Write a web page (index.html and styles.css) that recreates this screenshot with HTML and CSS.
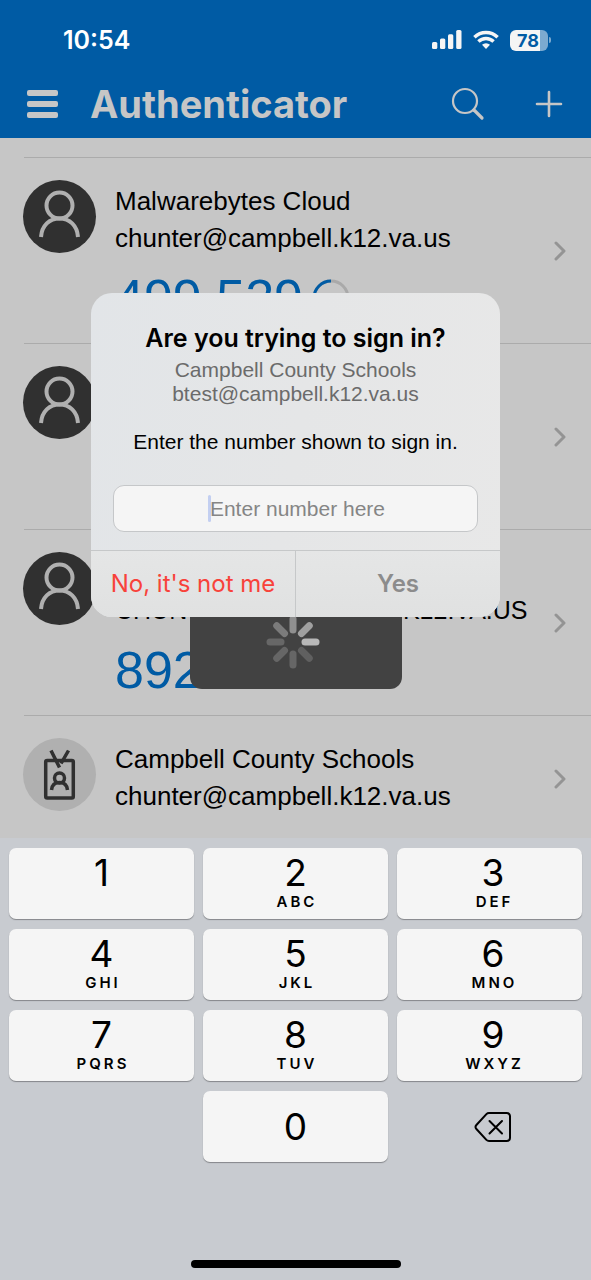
FILE: index.html
```
<!DOCTYPE html>
<html lang="en">
<head>
<meta charset="utf-8">
<meta name="viewport" content="width=device-width, initial-scale=1">
<title>Authenticator</title>
<link rel="stylesheet" href="styles.css">
</head>
<body>
<svg class="defs" width="0" height="0" aria-hidden="true">
  <symbol id="person" viewBox="0 0 73 73">
    <circle cx="36.500" cy="25.500" r="13"/>
    <path d="M18 57c.8-11.500 8.500-18.500 18.500-18.500s17.700 7 18.500 18.500"/>
  </symbol>
  <symbol id="chevron" viewBox="0 0 12 20">
    <path d="M2 2l8 8-8 8"/>
  </symbol>
</svg>
<div class="screen">
  <header class="header">
    <div class="status">
      <time class="clock">10:54</time>
      <div class="indicators">
        <svg width="30" height="20" viewBox="0 0 30 20" fill="#f5f5f5" aria-label="Signal"><rect x="0" y="12" width="5.300" height="7" rx="1.500"/><rect x="8" y="8.500" width="5.300" height="10.500" rx="1.500"/><rect x="16" y="4.300" width="5.300" height="14.700" rx="1.500"/><rect x="24.200" y="0" width="5.300" height="19" rx="1.500"/></svg>
        <svg width="26" height="20" viewBox="0 0 26 20" fill="none" stroke="#f5f5f5" stroke-width="3.400" aria-label="Wi-Fi"><path d="M1.400 7.200a16.500 16.500 0 0 1 23.200 0"/><path d="M5.400 11.600a11 11 0 0 1 15.200 0"/><path d="M13 19l-4-4.200a6 6 0 0 1 8 0z" fill="#f5f5f5" stroke="none"/></svg>
        <div class="battery"><span class="battery-body">78</span><span class="battery-tip"></span></div>
      </div>
    </div>
    <div class="toolbar">
      <button class="icon-button" aria-label="Menu"><svg width="32" height="30" viewBox="0 0 32 30" fill="#c6c6c6"><rect x="1" y="1" width="31" height="6" rx="2"/><rect x="1" y="12" width="31" height="6" rx="2"/><rect x="1" y="23" width="31" height="6" rx="2"/></svg></button>
      <h1 class="title">Authenticator</h1>
      <button class="icon-button" aria-label="Search"><svg width="34" height="34" viewBox="0 0 34 34" fill="none" stroke="#c6c6c6" stroke-linecap="round"><circle cx="14" cy="14" r="12" stroke-width="2.200"/><path d="M23 23l8 8" stroke-width="3.200"/></svg></button>
      <button class="icon-button" aria-label="Add account"><svg width="28" height="28" viewBox="0 0 28 28" fill="none" stroke="#c6c6c6" stroke-width="2.600" stroke-linecap="round"><path d="M14 2v24M2 14h24"/></svg></button>
    </div>
  </header>

  <main class="content">
    <ul class="accounts">
      <li class="account">
        <svg class="avatar"><use href="#person"/></svg>
        <div class="details">
          <p class="line">Malwarebytes Cloud</p>
          <p class="line">chunter@campbell.k12.va.us</p>
          <p class="code">499 529 <svg width="38" height="38" viewBox="0 0 38 38" fill="none" stroke-width="3"><circle cx="19" cy="19" r="17" stroke="#a9a9a9"/><path d="M19 2a17 17 0 0 0-17 17" stroke="#005ba4"/></svg></p>
        </div>
        <svg class="chevron"><use href="#chevron"/></svg>
      </li>
      <li class="account">
        <svg class="avatar"><use href="#person"/></svg>
        <div class="details"></div>
        <svg class="chevron"><use href="#chevron"/></svg>
      </li>
      <li class="account">
        <svg class="avatar"><use href="#person"/></svg>
        <div class="details">
          <p class="line"></p>
          <p class="line line-upper">CHUNTER@CAMPBELL.K12.VA.US</p>
          <p class="code">892 829</p>
        </div>
        <svg class="chevron"><use href="#chevron"/></svg>
      </li>
      <li class="account account-last">
        <svg class="avatar avatar-badge" viewBox="0 0 73 73"><rect x="22.700" y="22.500" width="27.600" height="37.500" rx="1.500"/><path d="M28 12.500l8.500 17M45.500 12.500l-7.500 13"/><circle cx="36.500" cy="40" r="5"/><path d="M28.500 52c.5-5 3.500-7.500 8-7.500s7.500 2.500 8 7.500"/></svg>
        <div class="details">
          <p class="line">Campbell County Schools</p>
          <p class="line">chunter@campbell.k12.va.us</p>
        </div>
        <svg class="chevron"><use href="#chevron"/></svg>
      </li>
    </ul>

    <div class="overlay overlay-progress">
      <div class="progress" role="status" aria-label="Loading">
        <svg width="54" height="54" viewBox="-27 -27 54 54" stroke-width="7" stroke-linecap="round"><path d="M0-12v-11" stroke="#8f8f8f"/><path d="M0-12v-11" stroke="#a0a0a0" transform="rotate(45)"/><path d="M0-12v-11" stroke="#b8b8b8" transform="rotate(90)"/><path d="M0-12v-11" stroke="#606060" transform="rotate(135)"/><path d="M0-12v-11" stroke="#666" transform="rotate(180)"/><path d="M0-12v-11" stroke="#666" transform="rotate(225)"/><path d="M0-12v-11" stroke="#676767" transform="rotate(270)"/><path d="M0-12v-11" stroke="#7b7b7b" transform="rotate(315)"/></svg>
      </div>
    </div>

    <div class="overlay overlay-dialog">
      <form class="dialog" role="dialog" aria-labelledby="dialog-title">
        <div class="dialog-body">
          <h2 class="dialog-title" id="dialog-title">Are you trying to sign in?</h2>
          <p class="dialog-account">Campbell County Schools<br>btest@campbell.k12.va.us</p>
          <label class="dialog-prompt" for="number">Enter the number shown to sign in.</label>
          <div class="field">
            <input class="number" id="number" type="text" inputmode="numeric" placeholder="Enter number here">
            <span class="caret"></span>
          </div>
        </div>
        <div class="actions">
          <button class="action action-deny" type="button">No, it's not me</button>
          <button class="action action-approve" type="button" disabled>Yes</button>
        </div>
      </form>
    </div>
  </main>

  <section class="keyboard" aria-label="Number pad">
    <div class="keys">
      <button class="key"><span class="digit">1</span><span class="letters"></span></button>
      <button class="key"><span class="digit">2</span><span class="letters">ABC</span></button>
      <button class="key"><span class="digit">3</span><span class="letters">DEF</span></button>
      <button class="key"><span class="digit">4</span><span class="letters">GHI</span></button>
      <button class="key"><span class="digit">5</span><span class="letters">JKL</span></button>
      <button class="key"><span class="digit">6</span><span class="letters">MNO</span></button>
      <button class="key"><span class="digit">7</span><span class="letters">PQRS</span></button>
      <button class="key"><span class="digit">8</span><span class="letters">TUV</span></button>
      <button class="key"><span class="digit">9</span><span class="letters">WXYZ</span></button>
      <button class="key key-zero"><span class="digit">0</span></button>
      <button class="key key-delete" aria-label="Delete"><svg width="38" height="32" viewBox="0 0 38 32" fill="none" stroke="#000" stroke-width="2" stroke-linecap="round" stroke-linejoin="round"><path d="M15 2h17.500q3.500 0 3.500 3.500v21q0 3.500-3.500 3.500h-17.500q-1.500 0-2.600-1.100l-10-10.900q-1.800-2 0-4l10-10.900q1.100-1.100 2.600-1.100z"/><path d="M15.500 10l12.500 12.500M28 10l-12.500 12.500"/></svg></button>
    </div>
    <div class="home-bar"></div>
  </section>
</div>
</body>
</html>
```
FILE: styles.css
```
* { box-sizing: border-box; }
body { margin: 0; font-family: "Liberation Sans", Arial, sans-serif; color: #000; }
button { border: 0; padding: 0; background: none; font: inherit; color: inherit; }
h1, h2, p, ul { margin: 0; padding: 0; }
.defs { display: block; }
.screen { display: flex; flex-direction: column; min-height: 100vh; background: #c6c6c6; }

.header { background: #005ba4; padding: 22px 26px 0; }
.status { display: flex; justify-content: space-between; align-items: center; height: 36px; padding: 0 14px 0 37px; }
.clock { font: 600 25px/36px Inter, sans-serif; color: #fff; }
.indicators { display: flex; align-items: center; gap: 11px; }
.battery { display: flex; align-items: center; gap: 1px; }
.battery-body { width: 38px; height: 21px; padding-right: 2px; border-radius: 6px; background: linear-gradient(90deg, #f5f5f5 78%, #7caad0 78%); color: #005ba4; font: 700 18px/21px Inter, sans-serif; text-align: center; }
.battery-tip { width: 2px; height: 6px; border-radius: 0 2px 2px 0; background: #7caad0; }
.toolbar { display: flex; align-items: center; height: 80px; padding-top: 12px; }
.icon-button { display: flex; margin-right: 50px; }
.icon-button:first-child { margin-right: 32px; }
.icon-button:last-child { margin-right: 2px; }
.title { flex: 1; font: 700 38px/46px Inter, sans-serif; color: #c6c6c6; }

.content { position: relative; flex: none; padding-top: 19px; }
.accounts { list-style: none; }
.account { position: relative; display: flex; align-items: flex-start; height: 186px; padding: 23px 25px 0 23px; }
.account::before { content: ""; position: absolute; top: 0; left: 24px; right: 0; height: 1px; background: #ababab; }
.account-last { height: 123px; }
.avatar { flex: none; width: 73px; height: 73px; border-radius: 50%; background: #303030; fill: none; stroke: #b0b0b0; stroke-width: 4; }
.avatar-badge { background: #b0b0b0; stroke: #303030; stroke-width: 3.500; }
.details { flex: 1; padding: 3px 0 0 19px; }
.line { min-height: 37px; font-size: 26px; line-height: 37px; white-space: nowrap; }
.line-upper { font-size: 25px; }
.code { display: flex; align-items: center; gap: 9px; padding-top: 13px; color: #005ba4; font-size: 52px; line-height: 56px; white-space: nowrap; }
.chevron { flex: none; width: 12px; height: 20px; margin-top: 61px; fill: none; stroke: #949494; stroke-width: 3; stroke-linecap: round; stroke-linejoin: round; }
.account-last .chevron { margin-top: 31px; }

.overlay { position: absolute; inset: 0; display: flex; justify-content: center; align-items: flex-start; }
.overlay-progress { padding-top: 456px; }
.progress { display: flex; justify-content: center; align-items: center; width: 212px; height: 95px; padding-right: 5px; border-radius: 12px; background: #424242; }
.overlay-dialog { padding: 155px 16px 0; }
.dialog { width: 100%; max-width: 409px; border-radius: 21px; overflow: hidden; background: linear-gradient(100deg, #e2e5e8, #e5e6e7 50%, #e8e8e8); text-align: center; }
.dialog-body { display: flex; flex-direction: column; padding: 29px 22px 18px; }
.dialog-title { font: 600 25px/32px Inter, sans-serif; }
.dialog-account { padding-top: 4px; font-size: 21px; line-height: 24px; color: #6b6b6b; }
.dialog-prompt { padding: 23px 0 30px; font-size: 21px; line-height: 26px; }
.field { position: relative; display: flex; }
.number { width: 100%; height: 47px; padding: 0 2px 0 6px; border: 1px solid #c5c7c9; border-radius: 11px; background: #f5f5f5; font: 21px "Liberation Sans", Arial, sans-serif; text-align: center; }
.number::placeholder { color: #858585; opacity: 1; }
.caret { position: absolute; left: calc(50% - 88px); top: 10px; width: 3px; height: 27px; border-radius: 2px; background: #c3cff1; }
.actions { display: flex; border-top: 1px solid #c6c8c9; }
.action { flex: 1; height: 66px; font: 400 24px/30px Inter, sans-serif; background: linear-gradient(#e5e6e6, #e0e1e1); }
.action-deny { color: #f8423a; border-right: 1px solid #c6c8c9; }
.action-approve { color: #8c8c8c; font-weight: 600; }

.keyboard { flex: 1; display: flex; flex-direction: column; justify-content: space-between; align-items: center; padding: 10px 9px 12px; background: #c8cbd0; }
.keys { display: grid; grid-template-columns: repeat(3, 1fr); gap: 10px 9px; width: 100%; }
.key { display: flex; flex-direction: column; align-items: center; height: 71px; padding-top: 4px; border-radius: 7px; background: #f5f5f5; box-shadow: 0 1px 1px #84868a; font-family: Inter, sans-serif; }
.key:nth-child(3n) { padding-left: 7px; }
.digit { font-size: 37px; line-height: 41px; }
.letters { padding-left: 3px; font-size: 15px; font-weight: 600; line-height: 17px; letter-spacing: 3px; }
.key-zero { grid-column: 2; justify-content: center; padding: 0; }
.key-delete { justify-content: center; padding: 0 0 0 7px; background: none; box-shadow: none; }
.home-bar { width: 210px; height: 8px; border-radius: 4px; background: #000; }
```
